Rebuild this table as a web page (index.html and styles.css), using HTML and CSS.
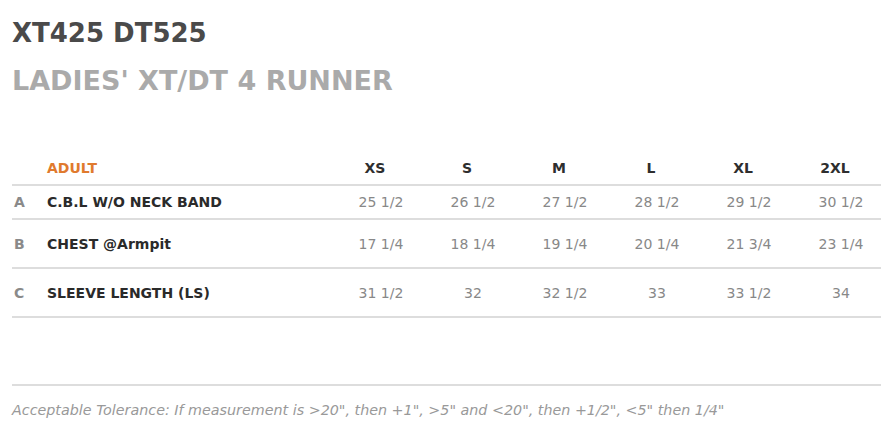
FILE: index.html
```html
<!DOCTYPE html>
<html>
<head>
<meta charset="utf-8">
<link rel="stylesheet" href="styles.css">
</head>
<body>
<div class="page">
  <h1 class="title">XT425 DT525</h1>
  <h2 class="subtitle">LADIES' XT/DT 4 RUNNER</h2>
  <table class="chart">
    <colgroup>
      <col class="c-letter"><col class="c-label">
      <col class="c-size"><col class="c-size"><col class="c-size"><col class="c-size"><col class="c-size"><col class="c-size">
    </colgroup>
    <thead>
      <tr class="head">
        <th></th><th class="adult">ADULT</th>
        <th>XS</th><th>S</th><th>M</th><th>L</th><th>XL</th><th>2XL</th>
      </tr>
    </thead>
    <tbody>
      <tr class="row-a">
        <td class="letter">A</td><td class="label">C.B.L W/O NECK BAND</td>
        <td>25 1/2</td><td>26 1/2</td><td>27 1/2</td><td>28 1/2</td><td>29 1/2</td><td>30 1/2</td>
      </tr>
      <tr class="row-b">
        <td class="letter">B</td><td class="label">CHEST @Armpit</td>
        <td>17 1/4</td><td>18 1/4</td><td>19 1/4</td><td>20 1/4</td><td>21 3/4</td><td>23 1/4</td>
      </tr>
      <tr class="row-b">
        <td class="letter">C</td><td class="label">SLEEVE LENGTH (LS)</td>
        <td>31 1/2</td><td>32</td><td>32 1/2</td><td>33</td><td>33 1/2</td><td>34</td>
      </tr>
    </tbody>
  </table>
  <p class="note">Acceptable Tolerance: If measurement is &gt;20", then +1", &gt;5" and &lt;20", then +1/2", &lt;5" then 1/4"</p>
</div>
</body>
</html>
```

FILE: styles.css
```css
html, body {
  margin: 0;
  padding: 0;
  background: #fff;
}
body {
  font-family: "DejaVu Sans", sans-serif;
  color: #333;
}
.page {
  padding: 17px 0 0 12px;
}
.title {
  margin: 0;
  font-size: 26px;
  line-height: 32px;
  font-weight: bold;
  color: #4a4a4a;
}
.subtitle {
  margin: 16px 0 0 0;
  font-size: 27px;
  line-height: 32px;
  font-weight: bold;
  color: #aaaaaa;
}
.chart {
  margin-top: 55px;
  width: 869px;
  border-collapse: collapse;
  table-layout: fixed;
  font-size: 14px;
}
.c-letter { width: 35px; }
.c-label { width: 282px; }
.c-size { width: 92px; }
.chart th {
  font-weight: bold;
  color: #2e2e2e;
  text-align: center;
  height: 32px;
  padding: 0;
  border-bottom: 2px solid #ddd;
}
.chart th.adult {
  text-align: left;
  color: #e07a2e;
}
.chart td {
  padding: 0 0 0 12px;
  text-align: center;
  color: #888;
  border-bottom: 2px solid #ddd;
}
.row-a td { height: 32px; }
.row-b td { height: 47px; }
.chart td.letter {
  text-align: left;
  padding-left: 2px;
  font-weight: bold;
  color: #8a8a8a;
}
.chart td.label {
  text-align: left;
  padding-left: 0;
  font-weight: bold;
  color: #2a2a2a;
}
.note {
  margin: 66px 0 0 0;
  padding-top: 16px;
  border-top: 2px solid #ddd;
  font-size: 14.3px;
  font-style: italic;
  color: #999;
}
```
